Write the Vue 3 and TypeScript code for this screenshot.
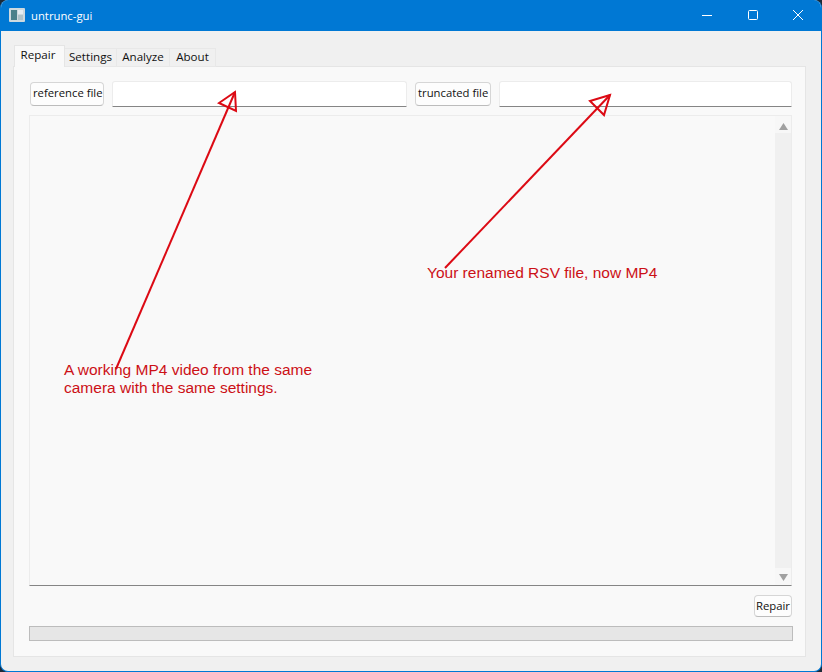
<script setup lang="ts">
const tabs: string[] = ['Repair', 'Settings', 'Analyze', 'About']
</script>

<template>
  <div class="window">
    <header class="titlebar">
      <div class="title">
        <svg class="appicon" width="16" height="14" viewBox="0 0 16 14">
          <rect x="0" y="0" width="16" height="14" rx="1" fill="#d8dfe0" />
          <rect x="2" y="2" width="6" height="10" fill="#4f8288" />
          <rect x="9" y="2" width="5" height="4" fill="#f2f4f4" />
          <rect x="9" y="7" width="5" height="5" fill="#b9c8ca" />
        </svg>
        <span>untrunc-gui</span>
      </div>
      <div class="controls">
        <svg width="12" height="12" viewBox="0 0 12 12"><path d="M1 6.5H11" stroke="#fff" fill="none" /></svg>
        <svg width="12" height="12" viewBox="0 0 12 12"><rect x="1.5" y="1.5" width="9" height="9" rx="1" stroke="#fff" fill="none" /></svg>
        <svg width="12" height="12" viewBox="0 0 12 12"><path d="M1 1L11 11M11 1L1 11" stroke="#fff" fill="none" /></svg>
      </div>
    </header>

    <main class="client">
      <nav class="tabs">
        <div v-for="(t, i) in tabs" :key="t" class="tab" :class="{ active: i === 0 }">{{ t }}</div>
      </nav>
      <section class="panel">
        <div class="filerow">
          <button class="btn"><span>reference file</span></button>
          <div class="input first"></div>
          <button class="btn"><span>truncated file</span></button>
          <div class="input"></div>
        </div>
        <div class="log">
          <div class="logtext"></div>
          <div class="scroll">
            <div class="sbtn up"><svg width="9" height="7" viewBox="0 0 9 7"><path d="M4.5 0L9 7H0Z" fill="#a0a0a0" /></svg></div>
            <div class="track"></div>
            <div class="sbtn down"><svg width="9" height="7" viewBox="0 0 9 7"><path d="M0 0H9L4.5 7Z" fill="#a0a0a0" /></svg></div>
          </div>
        </div>
        <div class="actions"><button class="btn repair">Repair</button></div>
        <div class="progress"></div>
      </section>
    </main>

    <svg class="arrows" width="822" height="672" viewBox="0 0 822 672">
      <g stroke="#dc0a14" stroke-width="2" fill="none">
        <path d="M116 369L235 92" />
        <path d="M235 92L219 103L236 111Z" />
        <path d="M445 268L610 95" />
        <path d="M610 95L590 101L604 115Z" />
      </g>
    </svg>
    <p class="note note-a">A working MP4 video from the same<br />camera with the same settings.</p>
    <p class="note note-b">Your renamed RSV file, now MP4</p>
  </div>
</template>

<style scoped>
.window {
  position: relative;
  width: 822px;
  height: 672px;
  box-sizing: border-box;
  display: flex;
  flex-direction: column;
  background: #f0f0f0;
  border: 1px solid #0078d4;
  border-top: 0;
  border-radius: 8px;
  overflow: hidden;
  font-family: "Open Sans", "Noto Sans", sans-serif;
  font-size: 11.3px;
  color: #111;
}
.titlebar {
  flex: none;
  height: 31px;
  margin: 0 -1px;
  background: #0078d4;
  color: #fff;
  display: flex;
  align-items: center;
  justify-content: space-between;
}
.title {
  display: flex;
  align-items: center;
  gap: 6px;
  padding-left: 9px;
  margin-top: -1px;
}
.appicon { opacity: 0.95; }
.controls {
  display: flex;
  gap: 33.5px;
  padding-right: 18px;
  margin-top: -2px;
}
.client {
  flex: 1;
  display: flex;
  flex-direction: column;
  padding: 14px 15px 14px 12px;
  min-height: 0;
}
.tabs {
  display: flex;
  height: 22px;
  padding-left: 1px;
  margin-bottom: -1px;
  position: relative;
  z-index: 1;
  align-items: flex-end;
}
.tab {
  width: 52px;
  height: 19px;
  box-sizing: border-box;
  text-align: center;
  font-size: 11.6px;
  background: #f0f0f0;
  border: 1px solid #e8e8e8;
  border-left: 0;
  line-height: 15px;
}
.tab.active {
  width: 51px;
  height: 22px;
  padding-right: 3px;
  background: #f9f9f9;
  border: 1px solid #e5e5e5;
  border-bottom: 0;
  line-height: 18px;
}
.tab:nth-child(3) { width: 53px; }
.tab:last-child { width: 46px; }
.panel {
  flex: 1;
  min-height: 0;
  display: flex;
  flex-direction: column;
  background: #f9f9f9;
  border: 1px solid #e5e5e5;
  padding: 14px 13px 15px 16px;
}
.filerow {
  display: flex;
  align-items: center;
  height: 26px;
  margin-bottom: 8px;
}
.btn {
  font: inherit;
  color: #111;
  box-sizing: border-box;
  height: 24px;
  padding: 0 2px 3px;
  background: #fdfdfd;
  border: 1px solid #d6d6d6;
  border-bottom-color: #bcbcbc;
  border-radius: 4px;
  white-space: nowrap;
  flex: none;
}
.filerow .btn:first-child { width: 74px; }
.filerow .btn:nth-child(3) { width: 76px; }
.input {
  flex: 1;
  height: 26px;
  box-sizing: border-box;
  background: #fff;
  border: 1px solid #ececec;
  border-bottom: 1px solid #858585;
  border-radius: 3px 3px 0 0;
  margin-left: 8px;
}
.input.first {
  flex: none;
  width: 295px;
  margin-right: 8px;
}
.log {
  flex: 1;
  min-height: 0;
  display: flex;
  background: #f9f9f9;
  border: 1px solid #ececec;
  border-bottom: 1px solid #858585;
  margin-left: -1px;
}
.logtext { flex: 1; }
.scroll {
  flex: none;
  width: 16px;
  background: #f0f0f0;
  display: flex;
  flex-direction: column;
}
.sbtn {
  flex: none;
  height: 17px;
  background: #f7f7f7;
  display: flex;
  align-items: center;
  justify-content: center;
  box-sizing: border-box;
}
.sbtn.up { padding-top: 3px; }
.sbtn.down { padding-top: 2px; }
.track { flex: 1; }
.actions {
  display: flex;
  justify-content: flex-end;
  margin-top: 9px;
  margin-bottom: 9px;
}
.repair {
  width: 38px;
  height: 22px;
  padding: 0 0 2px;
}
.progress {
  flex: none;
  height: 15px;
  margin-left: -1px;
  margin-right: -1px;
  background: #e6e6e6;
  border: 1px solid #bcbcbc;
  box-sizing: border-box;
}
.arrows {
  position: absolute;
  left: -1px;
  top: 0;
  pointer-events: none;
}
.note {
  position: absolute;
  margin: 0;
  font-family: "Liberation Sans", Arial, sans-serif;
  font-size: 15.5px;
  line-height: 18px;
  color: #cc1016;
  white-space: nowrap;
}
.note-a { left: 63px; top: 361px; }
.note-b { left: 426px; top: 264px; }
</style>

<style>
html, body { margin: 0; background: #1c2a38; }
</style>
